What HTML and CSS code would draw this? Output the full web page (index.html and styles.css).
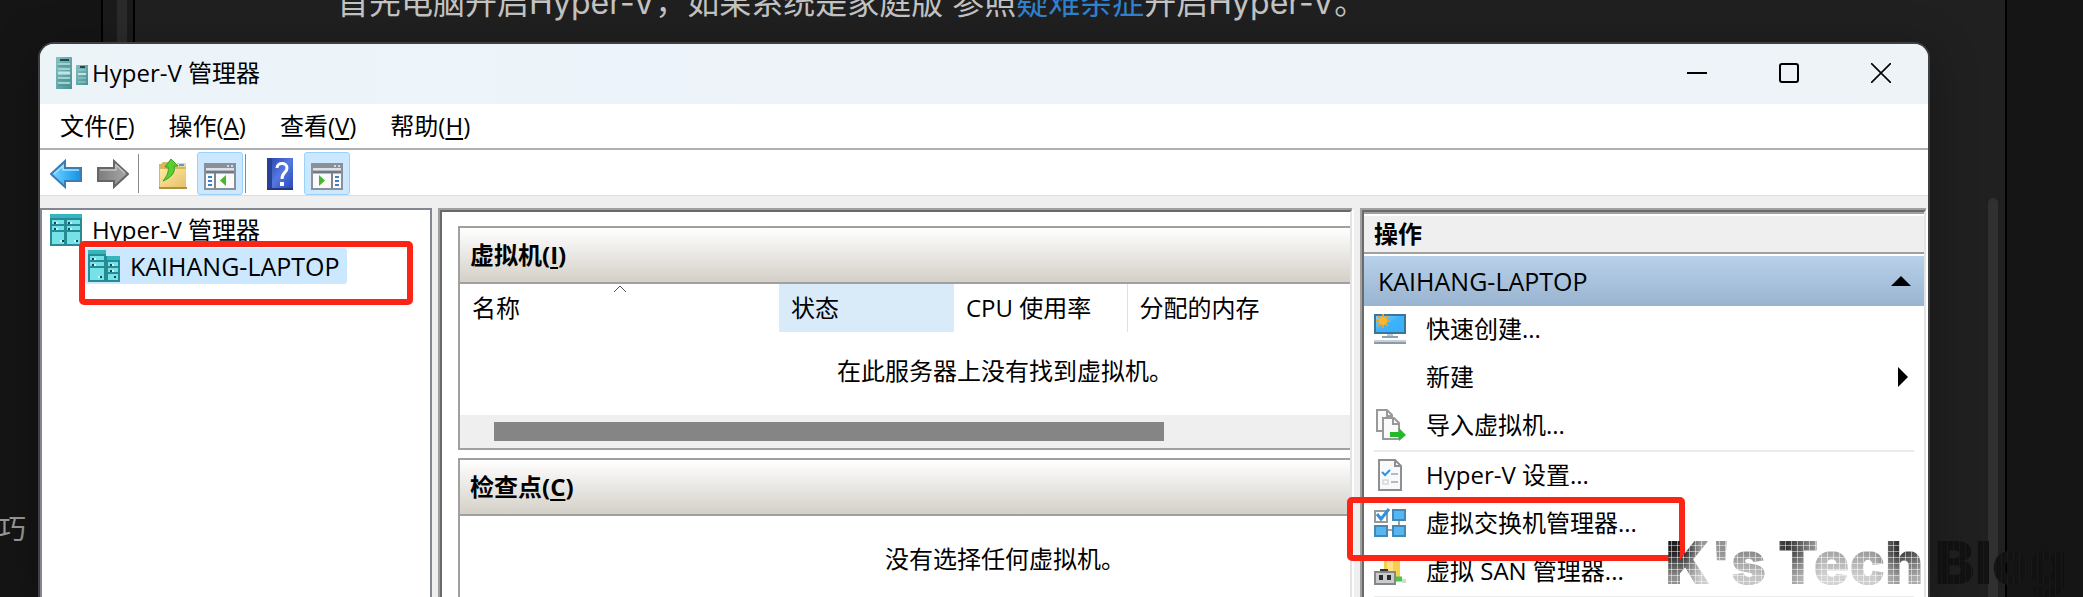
FILE: index.html
```html
<!DOCTYPE html>
<html lang="zh-CN">
<head>
<meta charset="utf-8">
<title>Hyper-V 管理器</title>
<link rel="stylesheet" href="styles.css">
</head>
<body>
<div class="blog">
  <aside class="blog-side"><p class="side-item">巧</p></aside>
  <div class="side-scroll"><span class="side-thumb"></span></div>
  <main class="blog-main">
    <p class="article-line">首先电脑开启Hyper-V，如果系统是家庭版 参照<a href="#faq">疑难杂症</a>开启Hyper-V。</p>
    <span class="main-thumb"></span>
  </main>
  <div class="blog-rail"></div>
</div>

<section class="window">
  <header class="titlebar">
    <svg class="app-icon" width="32" height="32" viewBox="0 0 32 32" aria-hidden="true">
      <defs><linearGradient id="srv" x1="0" x2="1" y1="0" y2="1"><stop offset="0" stop-color="#84c0c2"/><stop offset="1" stop-color="#4a9092"/></linearGradient></defs>
      <rect x="0" y="0" width="16" height="32" fill="url(#srv)"/>
      <rect x="4" y="2" width="9" height="2" fill="#25494b"/>
      <path d="M2 7h12M2 12h12M2 21h12M2 26h12" stroke="#9fd2d3" stroke-width="2"/>
      <path d="M2 16h12" stroke="#c4e4e4" stroke-width="3"/>
      <path d="M2 9h12M2 23h12M2 28h12" stroke="#4a9092"/>
      <rect x="20" y="8" width="12" height="20" fill="url(#srv)"/>
      <rect x="24" y="9" width="5" height="2" fill="#25494b"/>
      <path d="M22 13h8M22 21h8M22 25h8" stroke="#9fd2d3" stroke-width="1"/>
      <path d="M22 17h8" stroke="#c4e4e4" stroke-width="2"/>
    </svg>
    <h1 class="title">Hyper-V 管理器</h1>
    <div class="caption-buttons">
      <button class="caption" aria-label="最小化"><svg width="20" height="20" viewBox="0 0 20 20"><path d="M0 10h20" stroke="#000" stroke-width="2"/></svg></button>
      <button class="caption" aria-label="最大化"><svg width="20" height="20" viewBox="0 0 20 20"><rect x="1" y="1" width="18" height="18" rx="2" fill="none" stroke="#000" stroke-width="2"/></svg></button>
      <button class="caption" aria-label="关闭"><svg width="20" height="20" viewBox="0 0 20 20"><path d="M0 0L20 20M20 0L0 20" stroke="#000" stroke-width="1.6"/></svg></button>
    </div>
  </header>

  <nav class="menubar">
    <button class="menu">文件(<u>F</u>)</button>
    <button class="menu">操作(<u>A</u>)</button>
    <button class="menu">查看(<u>V</u>)</button>
    <button class="menu">帮助(<u>H</u>)</button>
  </nav>

  <div class="toolbar">
    <button class="tool" aria-label="后退"><svg width="32" height="32" viewBox="0 0 32 32"><defs><linearGradient id="bk" x1="0" x2="1"><stop offset="0" stop-color="#7fd4ff"/><stop offset=".5" stop-color="#3db4f8"/><stop offset="1" stop-color="#1690e0"/></linearGradient></defs><path d="M1 16L15 3V10H31V23H15V29z" fill="url(#bk)" stroke="#3a7db4" stroke-width="2"/><path d="M4 16L13 8V12H29" fill="none" stroke="#a6e3ff" stroke-width="1.5"/></svg></button>
    <button class="tool" aria-label="前进"><svg width="32" height="32" viewBox="0 0 32 32"><defs><linearGradient id="fw" x1="0" x2="1"><stop offset="0" stop-color="#7c7c7c"/><stop offset="1" stop-color="#a8a8a8"/></linearGradient></defs><path d="M31 16L17 3V10H1V23H17V29z" fill="url(#fw)" stroke="#666" stroke-width="2"/><path d="M3 12H19V7L28 15" fill="none" stroke="#c4c4c4" stroke-width="1.5"/></svg></button>
    <span class="divider divider-wide"></span>
    <button class="tool" aria-label="上移一级"><svg width="28" height="32" viewBox="0 0 28 32"><defs><linearGradient id="fd" x1="0" x2="1" y1="0" y2="1"><stop offset="0" stop-color="#ffe9a3"/><stop offset="1" stop-color="#e5c067"/></linearGradient></defs><path d="M0 6h2l2-2h5v3h18v24H0z" fill="#d9b65c"/><rect x="18" y="5" width="9" height="4" fill="#e8d79c"/><rect x="20" y="6" width="5" height="2" fill="#4f9fe0"/><path d="M1 11h26v19H1z" fill="url(#fd)"/><path d="M0 30h28" stroke="#b08f43" stroke-width="2"/><path d="M12 1L19 8H15C17 15 11 20 4 23 8 18 10 14 9 9H6z" fill="#57cf35" stroke="#3aa01f"/></svg></button>
    <button class="tool tool-on" aria-label="显示/隐藏控制台树" aria-pressed="true"><svg width="32" height="32" viewBox="0 0 32 32"><rect x="1" y="6" width="30" height="25" fill="#fafafa" stroke="#8a9099" stroke-width="2"/><path d="M0 8h32" stroke="#8a9099" stroke-width="4"/><path d="M23 8h2M27 8h2" stroke="#d5dae2" stroke-width="2"/><path d="M2 11h28" stroke="#dde1e8" stroke-width="2"/><path d="M2 14h28" stroke="#707986" stroke-width="3"/><path d="M11 15v15" stroke="#7b8594" stroke-width="2"/><path d="M4 19h4M4 23h4M4 27h4" stroke="#3f7fc4" stroke-width="2"/><path d="M22 17v11L16 22.500z" fill="#45b62d"/></svg></button>
    <span class="divider"></span>
    <button class="tool" aria-label="帮助"><svg width="26" height="32" viewBox="0 0 26 32"><defs><linearGradient id="hp" x1="0" x2="1" y1="0" y2="1"><stop offset="0" stop-color="#2741a8"/><stop offset=".5" stop-color="#5578e0"/><stop offset="1" stop-color="#2547bd"/></linearGradient></defs><rect width="26" height="32" fill="url(#hp)"/><rect width="5" height="32" fill="#2a3f98"/><path d="M0 31h26" stroke="#27367e" stroke-width="2"/><path d="M10 10C10 4 20 4 20 10C20 15 15 14 15 21" fill="none" stroke="#fff" stroke-width="3"/><rect x="13" y="24" width="4" height="4" fill="#fff"/></svg></button>
    <button class="tool tool-on" aria-label="显示/隐藏操作窗格" aria-pressed="true"><svg width="32" height="32" viewBox="0 0 32 32"><rect x="1" y="6" width="30" height="25" fill="#fafafa" stroke="#8a9099" stroke-width="2"/><path d="M0 8h32" stroke="#8a9099" stroke-width="4"/><path d="M23 8h2M27 8h2" stroke="#d5dae2" stroke-width="2"/><path d="M2 11h28" stroke="#dde1e8" stroke-width="2"/><path d="M2 14h28" stroke="#707986" stroke-width="3"/><path d="M21 15v15" stroke="#7b8594" stroke-width="2"/><path d="M24 19h4M24 23h4M24 27h4" stroke="#3f7fc4" stroke-width="2"/><path d="M8 17v11L14 22.500z" fill="#45b62d"/></svg></button>
  </div>

  <div class="panes">
    <div class="tree">
      <div class="node root-node">
        <svg width="32" height="32" viewBox="0 0 32 32" aria-hidden="true"><rect width="32" height="32" fill="#278b93"/><rect width="32" height="4" fill="#35b5bc"/><path d="M2 6h12v4H2zM17 6h13v4H17zM2 12h12v4H2zM17 12h13v4H17zM2 18h12v12H2zM17 18h13v12H17z" fill="#74e2e8"/><path d="M4 9h2M18 9h2M4 15h2M18 15h2M12 27h2M26 27h2" stroke="#17474c" stroke-width="2"/><path d="M6 9h2M20 9h2M6 15h2M20 15h2M10 27h2M24 27h2" stroke="#c9fbfd" stroke-width="2"/></svg>
        <span>Hyper-V 管理器</span>
      </div>
      <div class="node host-node">
        <svg width="32" height="32" viewBox="0 0 32 32" aria-hidden="true"><path d="M0 0h18v6h14v26H0z" fill="#278b93"/><path d="M0 0h18v4H0zM19 6h13v4H19z" fill="#35b5bc"/><path d="M2 6h14v4H2zM2 12h14v4H2zM2 18h14v12H2zM20 12h10v4H20zM20 18h10v4H20zM20 24h10v6H20z" fill="#74e2e8"/><path d="M4 9h2M4 15h2M12 27h2M22 15h2M22 21h2M26 27h2" stroke="#17474c" stroke-width="2"/><path d="M6 9h2M6 15h2M10 27h2M24 15h2M24 21h2" stroke="#c9fbfd" stroke-width="2"/></svg>
        <span>KAIHANG-LAPTOP</span>
      </div>
      <span class="mark mark-host"></span>
    </div>

    <div class="center">
      <section class="group">
        <h2 class="group-title">虚拟机(<u>I</u>)</h2>
        <table class="vm-table">
          <colgroup><col class="col-name"><col class="col-state"><col class="col-cpu"><col></colgroup>
          <thead><tr>
            <th class="sorted">名称<svg class="caret" width="14" height="8" viewBox="0 0 14 8" aria-hidden="true"><path d="M1 7L7 1L13 7" fill="none" stroke="#555"/></svg></th>
            <th class="hot">状态</th>
            <th class="ruled">CPU 使用率</th>
            <th>分配的内存</th>
          </tr></thead>
          <tbody><tr><td class="message" colspan="4">在此服务器上没有找到虚拟机。</td></tr></tbody>
        </table>
        <div class="hscroll"><span class="hthumb"></span></div>
      </section>
      <section class="group group-rest">
        <h2 class="group-title">检查点(<u>C</u>)</h2>
        <p class="message checkpoint-message">没有选择任何虚拟机。</p>
      </section>
    </div>

    <aside class="actions">
      <h2 class="actions-title">操作</h2>
      <button class="host-bar"><span>KAIHANG-LAPTOP</span><svg width="20" height="10" viewBox="0 0 20 10" aria-hidden="true"><path d="M0 10L10 0L20 10z"/></svg></button>
      <ul class="action-list">
        <li><button class="action"><svg class="action-icon" width="32" height="32" viewBox="0 0 32 32"><defs><linearGradient id="sc" x1="0" x2="1" y1="0" y2="1"><stop offset="0" stop-color="#8ad6ff"/><stop offset=".5" stop-color="#3cb2fa"/><stop offset="1" stop-color="#3aaefa"/></linearGradient></defs><rect x="1" y="2" width="30" height="18" fill="url(#sc)" stroke="#3b7699" stroke-width="2"/><path d="M9 1v14M2 8h14M4 3l10 10M14 3L4 13" stroke="#f0a31f" stroke-width="2"/><circle cx="9" cy="8" r="4" fill="#fbb52e"/><path d="M13 22h6" stroke="#b9c7d6" stroke-width="2"/><path d="M8 24h16" stroke="#8ea0b4" stroke-width="2"/><path d="M0 28h32" stroke="#c4ced9" stroke-width="2"/><path d="M0 30h32" stroke="#8a98a8" stroke-width="2"/></svg><span>快速创建...</span></button></li>
        <li><button class="action"><span class="action-icon"></span><span>新建</span><svg class="submenu" width="10" height="20" viewBox="0 0 10 20"><path d="M0 0L10 10L0 20z"/></svg></button></li>
        <li><button class="action"><svg class="action-icon" width="32" height="32" viewBox="0 0 32 32"><path d="M3 1h10l5 5v16H3z" fill="#fafafa" stroke="#999" stroke-width="2"/><path d="M13 1v6h5" fill="none" stroke="#999" stroke-width="2"/><path d="M9 9h11l5 5v16H9z" fill="#fafafa" stroke="#999" stroke-width="2"/><path d="M19 9v6h6" fill="none" stroke="#999" stroke-width="2"/><path d="M16 23h9v-4l7 7-7 6v-4h-9z" fill="#22b92b"/></svg><span>导入虚拟机...</span></button></li>
        <li class="ruled-item"><button class="action"><svg class="action-icon" width="32" height="32" viewBox="0 0 32 32"><path d="M5 1h16l6 6v24H5z" fill="#f8f9fa" stroke="#8d8f92" stroke-width="2"/><path d="M21 1v6h6" fill="none" stroke="#8d8f92" stroke-width="2"/><path d="M8 13l3 3 5-5" fill="none" stroke="#2f93e3" stroke-width="2"/><path d="M17 15h7M17 23h7" stroke="#b6babf" stroke-width="2"/><rect x="9" y="21" width="5" height="4" fill="none" stroke="#c4c7ca"/></svg><span>Hyper-V 设置...</span></button></li>
        <li><button class="action"><svg class="action-icon" width="32" height="32" viewBox="0 0 32 32"><path d="M25 14v6M14 23h5" stroke="#9aa5ae" stroke-width="2"/><rect x="1" y="4" width="12" height="11" fill="#fff" stroke="#999" stroke-width="2"/><path d="M3 7l4 5 8-10" fill="none" stroke="#3191dd" stroke-width="3"/><path d="M19 3h12v10H19zM1 19h12v10H1zM19 19h12v10H19z" fill="#56b6f2" stroke="#4289b3" stroke-width="2"/></svg><span>虚拟交换机管理器...</span></button></li>
        <li><button class="action"><svg class="action-icon" width="32" height="32" viewBox="0 0 32 32"><path d="M10 0h16v24H10z" fill="#f5d04f"/><path d="M13 0h6v24H13z" fill="#fbe18a"/><rect x="6" y="14" width="8" height="3" fill="#333"/><rect x="1" y="17" width="20" height="12" fill="#c9cbcd" stroke="#85888b" stroke-width="2"/><path d="M5 20h4v5H5zM13 20h4v5h-4z" fill="#2b2b2b"/><path d="M22 24h6" stroke="#4fc24d" stroke-width="5"/><path d="M28 26h4" stroke="#c3e3c2" stroke-width="4"/></svg><span>虚拟 SAN 管理器...</span></button></li>
        <li class="ruled-item"></li>
      </ul>
      <span class="mark mark-switch"></span>
    </aside>
  </div>
</section>
<p class="watermark"><span class="wm-light">K's Tech </span><span class="wm-dark">Blog</span></p>
</body>
</html>
```
FILE: styles.css
```css
* { box-sizing: border-box; }

body {
  margin: 0;
  height: 100vh;
  overflow: hidden;
  position: relative;
  background: #151515;
  color: #000;
  font: 24px/32px "Open Sans", "Noto Sans CJK SC", sans-serif;
}

h1, h2, p, ul { margin: 0; padding: 0; font-weight: 400; font-size: 24px; }
ul { list-style: none; }
svg { display: block; flex: none; }
u { text-underline-offset: 3px; text-decoration-thickness: 2px; }

button {
  margin: 0;
  padding: 0;
  border: 0;
  background: none;
  color: inherit;
  font: inherit;
  text-align: left;
}

/* Blog page behind the window */
.blog { display: flex; height: 100%; }
.blog-side { width: 103px; background: #151515; border-right: 2px solid #000; }
.side-item { margin: 512px 0 0 -2px; font-size: 28px; color: #9a9a9a; }
.side-scroll { display: flex; justify-content: center; width: 32px; padding-left: 8px; background: #1b1b1b; border-right: 2px solid #000; }
.side-thumb { width: 10px; background: #2b2b2b; }
.blog-main { display: flex; flex: 1; justify-content: space-between; background: #202020; border-right: 2px solid #000; }
.blog-rail { width: 76px; background: #151515; }
.article-line { margin: -21px 0 0 202px; font-size: 32px; line-height: 48px; color: #c4c4c4; font-family: Inter, "Noto Sans CJK SC", sans-serif; }
.article-line a { color: #3182ce; text-decoration: none; }
.main-thumb { width: 10px; margin: 198px 7px 0 0; border-radius: 5px 5px 0 0; background: #303030; }

/* Window frame */
.window {
  position: absolute;
  inset: 42px 153px 0 38px;
  display: flex;
  flex-direction: column;
  border: 2px solid #404040;
  border-bottom: 0;
  border-radius: 16px 16px 0 0;
  overflow: hidden;
  background: #efefef;
  box-shadow: 0 8px 48px rgba(0, 0, 0, .3);
}
.titlebar { display: flex; align-items: center; height: 60px; padding: 0 1px 2px 16px; background: linear-gradient(90deg, #ecf4f8, #edf3fa 30%, #eef3f8); }
.title { margin-left: 4px; }
.caption-buttons { display: flex; margin-left: auto; }
.caption { display: grid; place-items: center; width: 92px; height: 56px; }

.menubar { display: flex; height: 46px; padding: 0 3px; background: #fff; border-bottom: 2px solid #b0b0b0; }
.menu { padding: 0 17px; }

.toolbar { display: flex; align-items: center; gap: 1px; height: 46px; padding: 2px 3px 0; background: #fff; border-bottom: 1px solid #ddd; }
.tool { display: grid; place-items: center; width: 46px; height: 43px; border: 1px solid transparent; border-radius: 3px; }
.tool-on { background: #cce8ff; border-color: #99d1ff; }
.divider { width: 1px; height: 39px; margin: 0 10px 0 1px; background: #8a8a8a; }

/* Panes */
.panes { display: flex; gap: 6px; flex: 1; min-height: 0; padding-top: 12px; }
.tree { position: relative; width: 392px; padding: 2px 8px; background: #fff; border: 2px solid #828790; border-bottom: 0; }
.node { display: flex; align-items: center; height: 36px; }
.root-node { gap: 10px; }
.host-node { gap: 10px; width: max-content; margin-left: 35px; padding: 0 7px 0 3px; border-radius: 3px; background: #cce8ff; font-size: 25px; }
.mark { position: absolute; border: 6px solid #fb2415; border-radius: 5px; }
.mark-host { left: 37px; top: 31px; width: 334px; height: 64px; }

.center {
  display: flex;
  flex: 1;
  flex-direction: column;
  gap: 8px;
  min-width: 0;
  padding: 14px 0 0 16px;
  background: #fff;
  border-top: 2px solid #696969;
  border-left: 2px solid #696969;
  border-right: 2px solid #e3e3e3;
  box-shadow: -2px 0 #a0a0a0, 0 -2px #a0a0a0, -2px -2px #a0a0a0, 2px 0 #fff;
  margin: 2px 2px 0;
}
.group { border: 2px solid #a0a0a0; border-right: 0; }
.group-rest { flex: 1; border-bottom: 0; }
.group-title {
  height: 56px;
  padding: 0 10px;
  line-height: 54px;
  font-weight: 700;
  background: linear-gradient(#fff, #d4d0c8);
  border-bottom: 2px solid #a0a0a0;
}
.vm-table { width: 100%; table-layout: fixed; border-collapse: collapse; }
.col-name { width: 319px; }
.col-state { width: 175px; }
.col-cpu { width: 173px; }
th { position: relative; height: 48px; padding: 0 12px; font-weight: 400; text-align: left; }
.hot { background: #d9ebf9; }
.ruled { border-right: 1px solid #e0e0e0; }
.caret { position: absolute; top: 1px; left: 50%; margin-left: -7px; }
.message { padding: 0 0 0 200px; text-align: center; }
td.message { height: 83px; padding-bottom: 6px; }
.checkpoint-message { padding-top: 27px; }
.hscroll { height: 33px; padding: 7px 186px 7px 34px; background: #efefef; }
.hthumb { display: block; height: 19px; background: #858585; }

/* Actions pane */
.actions {
  position: relative;
  width: 564px;
  margin: 2px 2px 0;
  background: #fff;
  border-top: 2px solid #696969;
  border-left: 2px solid #696969;
  border-right: 2px solid #e3e3e3;
  box-shadow: -2px 0 #a0a0a0, 0 -2px #a0a0a0, -2px -2px #a0a0a0, 2px 0 #fff;
}
.actions-title {
  height: 42px;
  margin-bottom: 2px;
  padding: 0 10px;
  line-height: 40px;
  font-weight: 700;
  background: #efefef;
  border-top: 2px solid #a0a0a0;
  border-bottom: 2px solid #a0a0a0;
  box-shadow: inset 0 2px #fff;
}
.host-bar {
  display: flex;
  align-items: center;
  justify-content: space-between;
  width: 100%;
  height: 50px;
  padding: 0 13px 0 14px;
  font-size: 25px;
  background: linear-gradient(#b9d1ea, #99b4d1);
}
.action { display: flex; align-items: center; gap: 20px; width: 100%; height: 48px; padding: 0 6px 2px 0; }
.action-list { padding: 0 10px; }
.action-icon { width: 32px; }
.submenu { margin-left: auto; }
.ruled-item { border-top: 2px solid #ebebeb; }
.mark-switch { left: -17px; top: 285px; width: 338px; height: 64px; }

/* Watermark */
.watermark {
  position: absolute;
  right: 16px;
  bottom: 0;
  font: 900 59px/68px Inter, sans-serif;
  white-space: pre;
}
.watermark span { color: transparent; background-clip: text; -webkit-background-clip: text; }
.wm-light {
  background-image:
    repeating-linear-gradient(90deg, rgba(255, 255, 255, .5) 0 1px, transparent 1px 6px),
    repeating-linear-gradient(rgba(255, 255, 255, .5) 0 1px, transparent 1px 6px),
    linear-gradient(rgba(255, 255, 255, 0) 35%, rgba(255, 255, 255, .5) 70%),
    linear-gradient(90deg, #1c1c1c, #222 7%, #999 13%, #888 35%, #333 45%, #aaa 58%, #999 78%, #333 86%, #777);
}
.wm-dark {
  background-image:
    repeating-linear-gradient(90deg, rgba(60, 60, 60, .2) 0 1px, transparent 1px 6px),
    linear-gradient(90deg, #101010, #131313 60%, #101010);
}
```
